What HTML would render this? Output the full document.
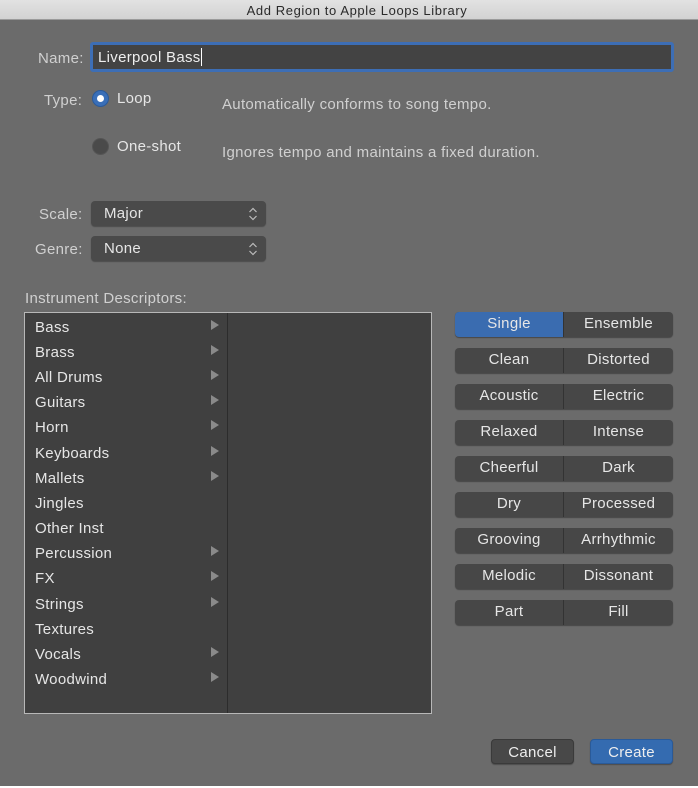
<!DOCTYPE html><html><head><style>
*{margin:0;padding:0;box-sizing:border-box}
body{width:698px;height:788px;background:#fff;font-family:"Liberation Sans",sans-serif;position:relative;overflow:hidden;letter-spacing:0.3px}
#w{position:absolute;left:0;top:0;width:698px;height:786px;background:#6b6b6b}
.a{position:absolute;white-space:nowrap}
.t{color:#e6e6e6;font-size:15px}
.l{color:#d0d0d0;font-size:15px}
#tb{position:absolute;left:0;top:0;width:698px;height:20px;background:linear-gradient(#e2e2e2,#d2d2d2);border-bottom:1px solid #9a9a9a;text-align:center;font-size:13px;color:#2a2a2a;line-height:21px;letter-spacing:0.6px;padding-left:16px}
.pop{position:absolute;left:91px;width:175px;height:25px;background:#4a4a4a;border-radius:4px;box-shadow:0 1px 1px rgba(0,0,0,.3);color:#e6e6e6;font-size:15px;line-height:26px;padding-left:13px}
.pop svg{position:absolute;right:8px;top:6px}
.li{position:absolute;left:35px;color:#e6e6e6;font-size:15px}
.ar{position:absolute;left:211px;width:0;height:0;border-left:8px solid #8a8a8a;border-top:5px solid transparent;border-bottom:5px solid transparent}
.seg{position:absolute;left:455px;width:218px;height:25px;background:#474747;border-radius:4px;box-shadow:0 1px 1px rgba(0,0,0,.35);display:flex;overflow:hidden}
.seg div{flex:0 0 108px;text-align:center;color:#e6e6e6;font-size:15px;line-height:24px}
.seg div+div{flex:1;border-left:1px solid #333}
.btn{position:absolute;top:739px;height:25px;border-radius:4px;color:#eee;font-size:15px;line-height:25px;text-align:center;box-shadow:0 1px 1px rgba(0,0,0,.3)}
</style></head><body><div id="w">
<div id="tb">Add Region to Apple Loops Library</div>
<div class="a l" style="left:38px;top:50px">Name:</div>
<div class="a" style="left:90px;top:42px;width:584px;height:30px;border:3px solid #3d6eb5;border-radius:3px;background:#434343;color:#eee;font-size:15px;line-height:26px;padding-left:5px">Liverpool Bass<span style="display:inline-block;width:1px;height:18px;background:#fff;vertical-align:-4px"></span></div>
<div class="a l" style="left:44px;top:92px">Type:</div>
<div class="a" style="left:92px;top:90px;width:17px;height:17px;border-radius:50%;background:#3a6fb8;border:1px solid #2b5a9a"><div style="position:absolute;left:4px;top:4px;width:7px;height:7px;border-radius:50%;background:#fff"></div></div>
<div class="a t" style="left:117px;top:90px">Loop</div>
<div class="a l" style="left:222px;top:96px">Automatically conforms to song tempo.</div>
<div class="a" style="left:92px;top:138px;width:17px;height:17px;border-radius:50%;background:#4a4a4a;border:1px solid #555"></div>
<div class="a t" style="left:117px;top:138px">One-shot</div>
<div class="a l" style="left:222px;top:144px">Ignores tempo and maintains a fixed duration.</div>
<div class="a l" style="left:39px;top:206px">Scale:</div>
<div class="pop" style="top:201px">Major<svg width="10" height="14" viewBox="0 0 10 14"><path d="M1.5 5L5 1.5 8.5 5M1.5 9L5 12.5 8.5 9" fill="none" stroke="#bbb" stroke-width="1.2"/></svg></div>
<div class="a l" style="left:35px;top:241px">Genre:</div>
<div class="pop" style="top:236px">None<svg width="10" height="14" viewBox="0 0 10 14"><path d="M1.5 5L5 1.5 8.5 5M1.5 9L5 12.5 8.5 9" fill="none" stroke="#bbb" stroke-width="1.2"/></svg></div>
<div class="a l" style="left:25px;top:290px">Instrument Descriptors:</div>
<div class="a" style="left:24px;top:312px;width:408px;height:402px;background:#404040;border:1px solid #b8b8b8"></div>
<div class="a" style="left:227px;top:313px;width:1px;height:400px;background:#2c2c2c"></div>
<div class="li" style="top:319px">Bass</div><div class="ar" style="top:320px"></div>
<div class="li" style="top:344px">Brass</div><div class="ar" style="top:345px"></div>
<div class="li" style="top:369px">All Drums</div><div class="ar" style="top:370px"></div>
<div class="li" style="top:394px">Guitars</div><div class="ar" style="top:395px"></div>
<div class="li" style="top:419px">Horn</div><div class="ar" style="top:420px"></div>
<div class="li" style="top:445px">Keyboards</div><div class="ar" style="top:446px"></div>
<div class="li" style="top:470px">Mallets</div><div class="ar" style="top:471px"></div>
<div class="li" style="top:495px">Jingles</div>
<div class="li" style="top:520px">Other Inst</div>
<div class="li" style="top:545px">Percussion</div><div class="ar" style="top:546px"></div>
<div class="li" style="top:570px">FX</div><div class="ar" style="top:571px"></div>
<div class="li" style="top:596px">Strings</div><div class="ar" style="top:597px"></div>
<div class="li" style="top:621px">Textures</div>
<div class="li" style="top:646px">Vocals</div><div class="ar" style="top:647px"></div>
<div class="li" style="top:671px">Woodwind</div><div class="ar" style="top:672px"></div>
<div class="seg" style="top:312px"><div style="background:#3a6cb0">Single</div><div>Ensemble</div></div>
<div class="seg" style="top:348px"><div>Clean</div><div>Distorted</div></div>
<div class="seg" style="top:384px"><div>Acoustic</div><div>Electric</div></div>
<div class="seg" style="top:420px"><div>Relaxed</div><div>Intense</div></div>
<div class="seg" style="top:456px"><div>Cheerful</div><div>Dark</div></div>
<div class="seg" style="top:492px"><div>Dry</div><div>Processed</div></div>
<div class="seg" style="top:528px"><div>Grooving</div><div>Arrhythmic</div></div>
<div class="seg" style="top:564px"><div>Melodic</div><div>Dissonant</div></div>
<div class="seg" style="top:600px"><div>Part</div><div>Fill</div></div>
<div class="btn" style="left:491px;width:83px;background:#484848;border:1px solid #3a3a3a">Cancel</div>
<div class="btn" style="left:590px;width:83px;background:#346bb0;border:1px solid #2a5a98">Create</div>
</div></body></html>
